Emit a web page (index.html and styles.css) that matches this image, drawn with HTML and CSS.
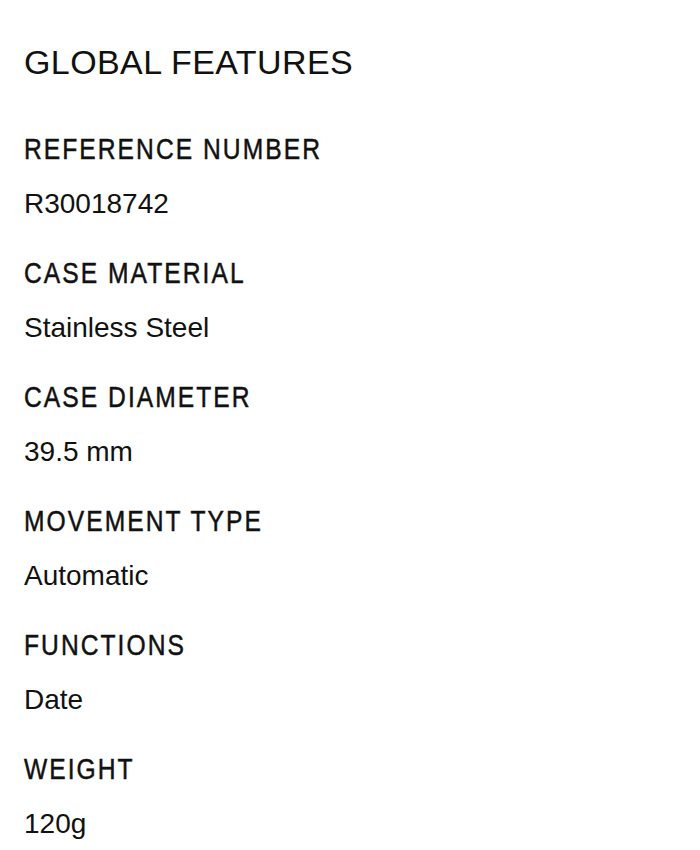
FILE: index.html
```html
<!DOCTYPE html>
<html lang="en">
<head>
<meta charset="utf-8">
<title>Global Features</title>
<link rel="stylesheet" href="styles.css">
</head>
<body>
<section class="features">
  <h1 class="features-title">GLOBAL FEATURES</h1>
  <dl class="spec-list">
    <div class="spec">
      <dt class="spec-label">REFERENCE NUMBER</dt>
      <dd class="spec-value">R30018742</dd>
    </div>
    <div class="spec">
      <dt class="spec-label">CASE MATERIAL</dt>
      <dd class="spec-value">Stainless Steel</dd>
    </div>
    <div class="spec">
      <dt class="spec-label">CASE DIAMETER</dt>
      <dd class="spec-value">39.5 mm</dd>
    </div>
    <div class="spec">
      <dt class="spec-label">MOVEMENT TYPE</dt>
      <dd class="spec-value">Automatic</dd>
    </div>
    <div class="spec">
      <dt class="spec-label">FUNCTIONS</dt>
      <dd class="spec-value">Date</dd>
    </div>
    <div class="spec">
      <dt class="spec-label">WEIGHT</dt>
      <dd class="spec-value">120g</dd>
    </div>
  </dl>
</section>
</body>
</html>
```
FILE: styles.css
```css
html, body {
  margin: 0;
  padding: 0;
  background: #ffffff;
}

body {
  font-family: "Liberation Sans", Arial, sans-serif;
  color: #111111;
}

.features {
  padding: 42px 24px 0 24px;
}

.features-title {
  margin: 0;
  font-size: 34px;
  line-height: 40px;
  font-weight: 400;
  letter-spacing: 0.4px;
}

.spec-list {
  margin: 49px 0 0 0;
  display: flex;
  flex-direction: column;
  gap: 34px;
}

.spec {
  display: flex;
  flex-direction: column;
  gap: 20px;
}

.spec-label {
  margin: 0;
  font-size: 30px;
  line-height: 36px;
  font-weight: 400;
  letter-spacing: 2.5px;
  white-space: nowrap;
  transform: scaleX(0.82);
  transform-origin: left center;
  -webkit-text-stroke: 0.5px #111111;
}

.spec-value {
  margin: 0;
  font-size: 28px;
  line-height: 34px;
}
```
